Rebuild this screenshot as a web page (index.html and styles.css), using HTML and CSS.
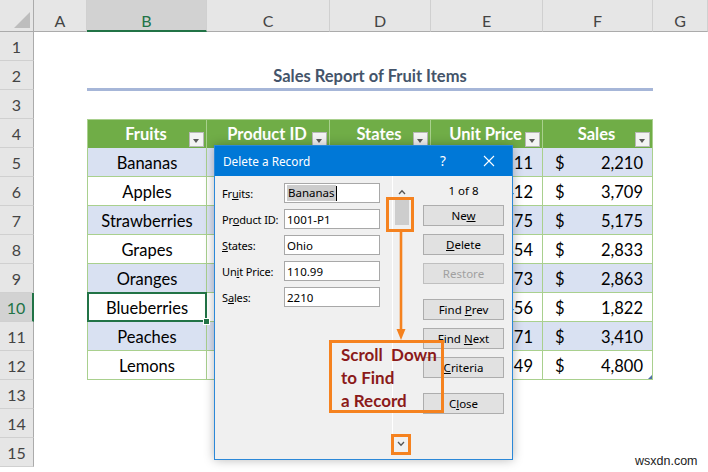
FILE: index.html
```html
<!DOCTYPE html>
<html>
<head>
<meta charset="utf-8">
<link rel="stylesheet" href="styles.css">
</head>
<body>
<div class="sheet">
  <div class="corner"><span class="tri"></span></div>
  <div class="ch">A</div><div class="ch sel">B</div><div class="ch">C</div><div class="ch">D</div><div class="ch">E</div><div class="ch">F</div><div class="ch">G</div>

  <div class="rh">1</div><div></div><div></div><div></div><div></div><div></div><div></div><div></div>
  <div class="rh">2</div><div></div><div class="title">Sales Report of Fruit Items</div><div></div>
  <div class="rh">3</div><div></div><div></div><div></div><div></div><div></div><div></div><div></div>

  <div class="rh">4</div><div></div>
  <div class="th first">Fruits<span class="fb"></span></div>
  <div class="th">Product ID<span class="fb"></span></div>
  <div class="th">States<span class="fb"></span></div>
  <div class="th">Unit Price<span class="fb"></span></div>
  <div class="th">Sales<span class="fb"></span></div>
  <div></div>

  <div class="rh">5</div><div></div>
  <div class="td first alt">Bananas</div><div class="td alt"></div><div class="td alt"></div><div class="td alt num"><span></span><span>111</span></div><div class="td alt num"><span>$</span><span>2,210</span></div><div></div>
  <div class="rh">6</div><div></div>
  <div class="td first">Apples</div><div class="td"></div><div class="td"></div><div class="td num"><span></span><span>412</span></div><div class="td num"><span>$</span><span>3,709</span></div><div></div>
  <div class="rh">7</div><div></div>
  <div class="td first alt">Strawberries</div><div class="td alt"></div><div class="td alt"></div><div class="td alt num"><span></span><span>575</span></div><div class="td alt num"><span>$</span><span>5,175</span></div><div></div>
  <div class="rh">8</div><div></div>
  <div class="td first">Grapes</div><div class="td"></div><div class="td"></div><div class="td num"><span></span><span>354</span></div><div class="td num"><span>$</span><span>2,833</span></div><div></div>
  <div class="rh">9</div><div></div>
  <div class="td first alt">Oranges</div><div class="td alt"></div><div class="td alt"></div><div class="td alt num"><span></span><span>573</span></div><div class="td alt num"><span>$</span><span>2,863</span></div><div></div>
  <div class="rh sel">10</div><div></div>
  <div class="td first active">Blueberries</div><div class="td"></div><div class="td"></div><div class="td num"><span></span><span>456</span></div><div class="td num"><span>$</span><span>1,822</span></div><div></div>
  <div class="rh">11</div><div></div>
  <div class="td first alt">Peaches</div><div class="td alt"></div><div class="td alt"></div><div class="td alt num"><span></span><span>171</span></div><div class="td alt num"><span>$</span><span>3,410</span></div><div></div>
  <div class="rh">12</div><div></div>
  <div class="td first">Lemons</div><div class="td"></div><div class="td"></div><div class="td num"><span></span><span>49</span></div><div class="td num last"><span>$</span><span>4,800</span></div><div></div>

  <div class="rh">13</div><div></div><div></div><div></div><div></div><div></div><div></div><div></div>
  <div class="rh">14</div><div></div><div></div><div></div><div></div><div></div><div></div><div></div>
  <div class="rh">15</div><div></div><div></div><div></div><div></div><div></div><div></div><div></div>
</div>

<div class="dialog">
  <div class="titlebar">
    <span class="ttl">Delete a Record</span>
    <span class="help">?</span>
    <span class="close"><svg width="12" height="12" viewBox="0 0 12 12"><path d="M1 1L11 11M11 1L1 11" stroke="#fff" stroke-width="1.1" fill="none"/></svg></span>
  </div>
  <div class="dbody">
    <div class="form">
      <div class="frow"><span class="lbl">Fr<u>u</u>its:</span><div class="inp"><span class="selt">Bananas</span><span class="caret"></span></div></div>
      <div class="frow"><span class="lbl">Pr<u>o</u>duct ID:</span><div class="inp">1001-P1</div></div>
      <div class="frow"><span class="lbl"><u>S</u>tates:</span><div class="inp">Ohio</div></div>
      <div class="frow"><span class="lbl">Un<u>i</u>t Price:</span><div class="inp">110.99</div></div>
      <div class="frow"><span class="lbl">S<u>a</u>les:</span><div class="inp">2210</div></div>
    </div>
    <div class="scroll">
      <div class="track">
        <svg class="chev up" width="8" height="6" viewBox="0 0 8 6"><polyline points="1,5 4,1.8 7,5" fill="none" stroke="#555" stroke-width="1.3"/></svg>
        <div class="thumb"></div>
      </div>
      <svg class="chev down" width="8" height="6" viewBox="0 0 8 6"><polyline points="1,1 4,4.2 7,1" fill="none" stroke="#555" stroke-width="1.3"/></svg>
    </div>
    <div class="btns">
      <div class="count">1 of 8</div>
      <div class="btn"><span>Ne<u>w</u></span></div>
      <div class="btn"><span><u>D</u>elete</span></div>
      <div class="btn dis"><span>Restore</span></div>
      <div class="btn gap"><span>Find <u>P</u>rev</span></div>
      <div class="btn"><span>Find <u>N</u>ext</span></div>
      <div class="btn"><span><u>C</u>riteria</span></div>
      <div class="btn gap"><span>C<u>l</u>ose</span></div>
    </div>
  </div>
</div>

<div class="hl hl-thumb"></div>
<svg class="arrow" width="12" height="108" viewBox="0 0 12 108"><line x1="6" y1="0" x2="6" y2="98" stroke="#F5821F" stroke-width="2.6"/><polygon points="1.5,97 10.5,97 6,108" fill="#F5821F"/></svg>
<div class="hl hl-note">Scroll&nbsp;&nbsp;Down<br>to Find<br>a Record</div>
<div class="hl hl-down"></div>

<div class="wm">wsxdn.com</div>
</body>
</html>
```

FILE: styles.css
```css
html, body {
  margin: 0;
  padding: 0;
  width: 708px;
  height: 472px;
  overflow: hidden;
  background: #fff;
}

.sheet {
  display: grid;
  grid-template-columns: 34px 53px 120px 123px 101px 112px 110px 55px;
  grid-template-rows: 32px repeat(15, 29px);
  font-family: "Lato", "Liberation Sans", sans-serif;
  font-size: 16.5px;
  color: #000;
}
.sheet > div {
  box-sizing: border-box;
}

.corner {
  background: #E6E6E6;
  border-right: 1px solid #ABABAB;
  border-bottom: 1px solid #ABABAB;
  position: relative;
}
.tri {
  position: absolute;
  right: 3px;
  bottom: 3px;
  width: 0;
  height: 0;
  border-left: 16px solid transparent;
  border-bottom: 16px solid #BDBDBD;
}

.ch {
  background: #E6E6E6;
  border-right: 1px solid #D0D0D0;
  border-bottom: 1px solid #ABABAB;
  display: flex;
  align-items: flex-end;
  justify-content: center;
  padding-bottom: 1px;
  color: #444;
  font-size: 16px;
}
.ch.sel {
  background: #D2D2D2;
  color: #217346;
  border-bottom: 2px solid #217346;
  padding-bottom: 0;
}

.rh {
  background: #E6E6E6;
  border-right: 1px solid #ABABAB;
  border-bottom: 1px solid #D0D0D0;
  display: flex;
  align-items: center;
  justify-content: center;
  color: #444;
  font-size: 16px;
  padding-top: 1px;
}
.rh.sel {
  background: #D2D2D2;
  color: #217346;
  border-right: 2px solid #217346;
}

.title {
  grid-column: span 5;
  display: flex;
  align-items: center;
  justify-content: center;
  font-weight: 700;
  color: #44546A;
  border-bottom: 3px solid #A6B6D8;
  padding-top: 3px;
  margin-bottom: -1px;
}

.th {
  background: #70AD47;
  color: #fff;
  font-weight: 700;
  border-right: 1px solid #A9D08E;
  border-top: 1px solid #A9D08E;
  display: flex;
  align-items: center;
  justify-content: center;
  position: relative;
  padding-right: 2px;
}
.th.first, .td.first {
  border-left: 1px solid #A9D08E;
}
.fb {
  position: absolute;
  right: 2px;
  bottom: 1px;
  width: 15px;
  height: 15px;
  box-sizing: border-box;
  background: #F3F3F3;
  border: 1px solid #B8B8B8;
}
.fb::after {
  content: "";
  position: absolute;
  left: 3px;
  top: 6px;
  border-left: 3.5px solid transparent;
  border-right: 3.5px solid transparent;
  border-top: 4px solid #595959;
}

.td {
  border-right: 1px solid #A9D08E;
  border-bottom: 1px solid #A9D08E;
  display: flex;
  align-items: center;
  justify-content: center;
  background: #fff;
  padding-top: 1px;
}
.td.alt {
  background: #D9E1F2;
}
.td.num {
  justify-content: space-between;
  padding: 1px 9px 0 12px;
}
.td.active {
  position: relative;
}
.td.active::after {
  content: "";
  position: absolute;
  left: -1px;
  top: -1px;
  right: -1px;
  bottom: -1px;
  border: 2px solid #217346;
}
.td.active::before {
  content: "";
  position: absolute;
  right: -4px;
  bottom: -4px;
  width: 5px;
  height: 5px;
  background: #217346;
  border: 1px solid #fff;
  z-index: 2;
}
.td.last {
  position: relative;
}
.td.last::after {
  content: "";
  position: absolute;
  right: 0;
  bottom: 0;
  border-left: 4px solid transparent;
  border-bottom: 4px solid #4F6FA8;
}

/* dialog */
.dialog {
  position: absolute;
  left: 214px;
  top: 145px;
  width: 299px;
  height: 315px;
  box-sizing: border-box;
  border: 1px solid #2B88D8;
  background: #F0F0F0;
  box-shadow: 0 0 10px rgba(0, 0, 0, 0.28);
  font-family: "Noto Sans", "Open Sans", sans-serif;
  font-size: 11px;
  color: #000;
}
.titlebar {
  height: 30px;
  background: #0078D7;
  color: #fff;
  display: flex;
  align-items: center;
}
.ttl {
  flex: 1;
  padding-left: 8px;
  font-size: 11.8px;
}
.help {
  width: 46px;
  text-align: center;
  font-size: 13.5px;
}
.close {
  width: 46px;
  display: flex;
  justify-content: center;
}
.dbody {
  display: flex;
  height: 283px;
}
.form {
  width: 158px;
  padding: 7px 0 0 7px;
}
.frow {
  display: flex;
  align-items: center;
  height: 20px;
  margin-bottom: 6px;
}
.lbl {
  width: 62px;
  flex: none;
  white-space: nowrap;
  letter-spacing: -0.15px;
}
.inp {
  width: 96px;
  height: 20px;
  box-sizing: border-box;
  background: #fff;
  border: 1px solid #A8A8A8;
  padding-left: 2px;
  display: flex;
  align-items: center;
  font-size: 11.5px;
}
.selt {
  background: #CCCCCC;
  padding: 0 1px;
  line-height: 16px;
}
.caret {
  width: 1px;
  height: 15px;
  background: #000;
}
.scroll {
  width: 18px;
  margin-left: 12px;
  display: flex;
  flex-direction: column;
  align-items: center;
}
.track {
  flex: 1;
  align-self: stretch;
  border-left: 1px solid #fff;
  display: flex;
  flex-direction: column;
  align-items: center;
}
.chev.up {
  margin-top: 13px;
}
.thumb {
  margin-top: 4px;
  width: 14px;
  height: 26px;
  background: #CDCDCD;
}
.chev.down {
  margin-top: 6px;
  margin-bottom: 12px;
}
.btns {
  width: 81px;
  margin-left: 13px;
  display: flex;
  flex-direction: column;
  font-size: 11.5px;
}
.count {
  padding-top: 6px;
  height: 18px;
  line-height: 18px;
  text-align: center;
}
.btn {
  height: 21px;
  box-sizing: border-box;
  margin-top: 8px;
  background: #E1E1E1;
  border: 1px solid #ADADAD;
  display: flex;
  align-items: center;
  justify-content: center;
}
.count + .btn {
  margin-top: 5px;
}
.btn.gap {
  margin-top: 15px;
}
.btn.dis {
  color: #A0A0A0;
  border-color: #BFBFBF;
}

/* annotations */
.hl {
  position: absolute;
  box-sizing: border-box;
  border: 3px solid #F5821F;
}
.hl-thumb {
  left: 386px;
  top: 197px;
  width: 28px;
  height: 35px;
}
.arrow {
  position: absolute;
  left: 395px;
  top: 232px;
}
.hl-note {
  left: 329px;
  top: 340px;
  width: 115px;
  height: 73px;
  padding-left: 9px;
  font-family: "Lato", "Liberation Sans", sans-serif;
  font-weight: 700;
  font-size: 17px;
  line-height: 23px;
  color: #8B1A1A;
  white-space: nowrap;
}
.hl-down {
  left: 391px;
  top: 434px;
  width: 20px;
  height: 21px;
}
.wm {
  position: absolute;
  left: 635px;
  top: 454px;
  font-family: "Liberation Sans", sans-serif;
  font-size: 12.5px;
  color: #222;
}
```
